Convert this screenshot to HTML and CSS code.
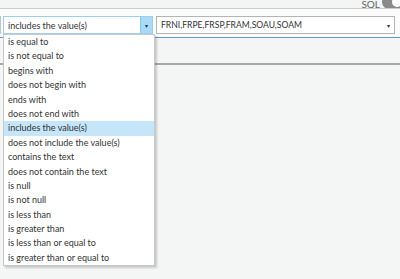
FILE: index.html
```html
<!DOCTYPE html>
<html lang="en">
<head>
    <meta charset="UTF-8">
    <title>Query builder</title>
    <link rel="stylesheet" href="styles.css">
</head>
<body>
    <div class="topbar">
        <span class="sql-label">SQL</span>
        <span class="toggle"><span class="knob"></span></span>
    </div>
    <div class="clause">
        <div class="edge"></div>
        <div class="select operator">
            <span class="value">includes the value(s)</span>
            <span class="arrow open">&#9662;</span>
            <ul class="menu">
                <li>is equal to</li>
                <li>is not equal to</li>
                <li>begins with</li>
                <li>does not begin with</li>
                <li>ends with</li>
                <li>does not end with</li>
                <li class="selected">includes the value(s)</li>
                <li>does not include the value(s)</li>
                <li>contains the text</li>
                <li>does not contain the text</li>
                <li>is null</li>
                <li>is not null</li>
                <li>is less than</li>
                <li>is greater than</li>
                <li>is less than or equal to</li>
                <li>is greater than or equal to</li>
            </ul>
        </div>
        <div class="select values">
            <span class="value">FRNI,FRPE,FRSP,FRAM,SOAU,SOAM</span>
            <span class="arrow">&#9662;</span>
        </div>
    </div>
    <div class="panel"></div>
    <div class="panel lower"></div>
</body>
</html>
```
FILE: styles.css
```css
body {
    margin: 0;
    font-family: Lato, "Open Sans", sans-serif;
    font-size: 9px;
    color: #333;
    background: #f4f6f6;
    height: 279px;
    overflow: hidden;
}
.topbar {
    height: 8px;
    border-bottom: 1px solid #c9cccc;
    background: #f3f4f4;
    display: flex;
    justify-content: flex-end;
    align-items: flex-end;
    overflow: hidden;
}
.sql-label {
    color: #666;
    font-size: 10px;
    line-height: 10px;
    margin-bottom: -1px;
    margin-right: 2px;
}
.toggle {
    width: 22px;
    height: 14px;
    border-radius: 7px;
    background: #8a8a8a;
    margin-bottom: -1px;
    margin-right: -4px;
    position: relative;
}
.knob {
    position: absolute;
    right: 2px;
    top: 2px;
    width: 10px;
    height: 10px;
    border-radius: 50%;
    background: #fff;
}
.clause {
    background: #fbfbfb;
    display: flex;
    gap: 3px;
    padding: 7px 5px 3px 0;
    border-bottom: 1px solid #5b9bd0;
    height: 18px;
}
.edge {
    width: 0;
    border-right: 1px solid #c4c4c4;
    margin-right: -1px;
}
.select {
    position: relative;
    display: flex;
    align-items: center;
    background: #fff;
    border: 1px solid #b4b4b4;
    box-sizing: border-box;
    height: 18px;
}
.operator {
    width: 150px;
    border-color: #9ccfee;
}
.values {
    flex: 1;
}
.value {
    flex: 1;
    padding-left: 4px;
    white-space: nowrap;
    color: #333;
}
.values .value {
    font-size: 8.6px;
}
.arrow {
    width: 11px;
    align-self: stretch;
    display: flex;
    align-items: center;
    justify-content: center;
    font-size: 6px;
    color: #333;
}
.arrow.open {
    background: #a8dbf8;
    border-left: 1px solid #8cc7ec;
}
.menu {
    position: absolute;
    top: 17px;
    left: -1px;
    width: 150px;
    margin: 0;
    padding: 0;
    list-style: none;
    background: #fff;
    border: 1px solid #c8c8c8;
    box-shadow: 2px 2px 2px rgba(0, 0, 0, 0.18);
    z-index: 5;
}
.menu li {
    height: 14.4px;
    line-height: 14.4px;
    padding-left: 4px;
    white-space: nowrap;
}
.menu li.selected {
    background: #c5e5f9;
}
.panel {
    height: 25px;
    border-bottom: 2px solid #a9a9a9;
    background: #f4f6f6;
}
.panel.lower {
    border-bottom: none;
    height: 200px;
}
```
